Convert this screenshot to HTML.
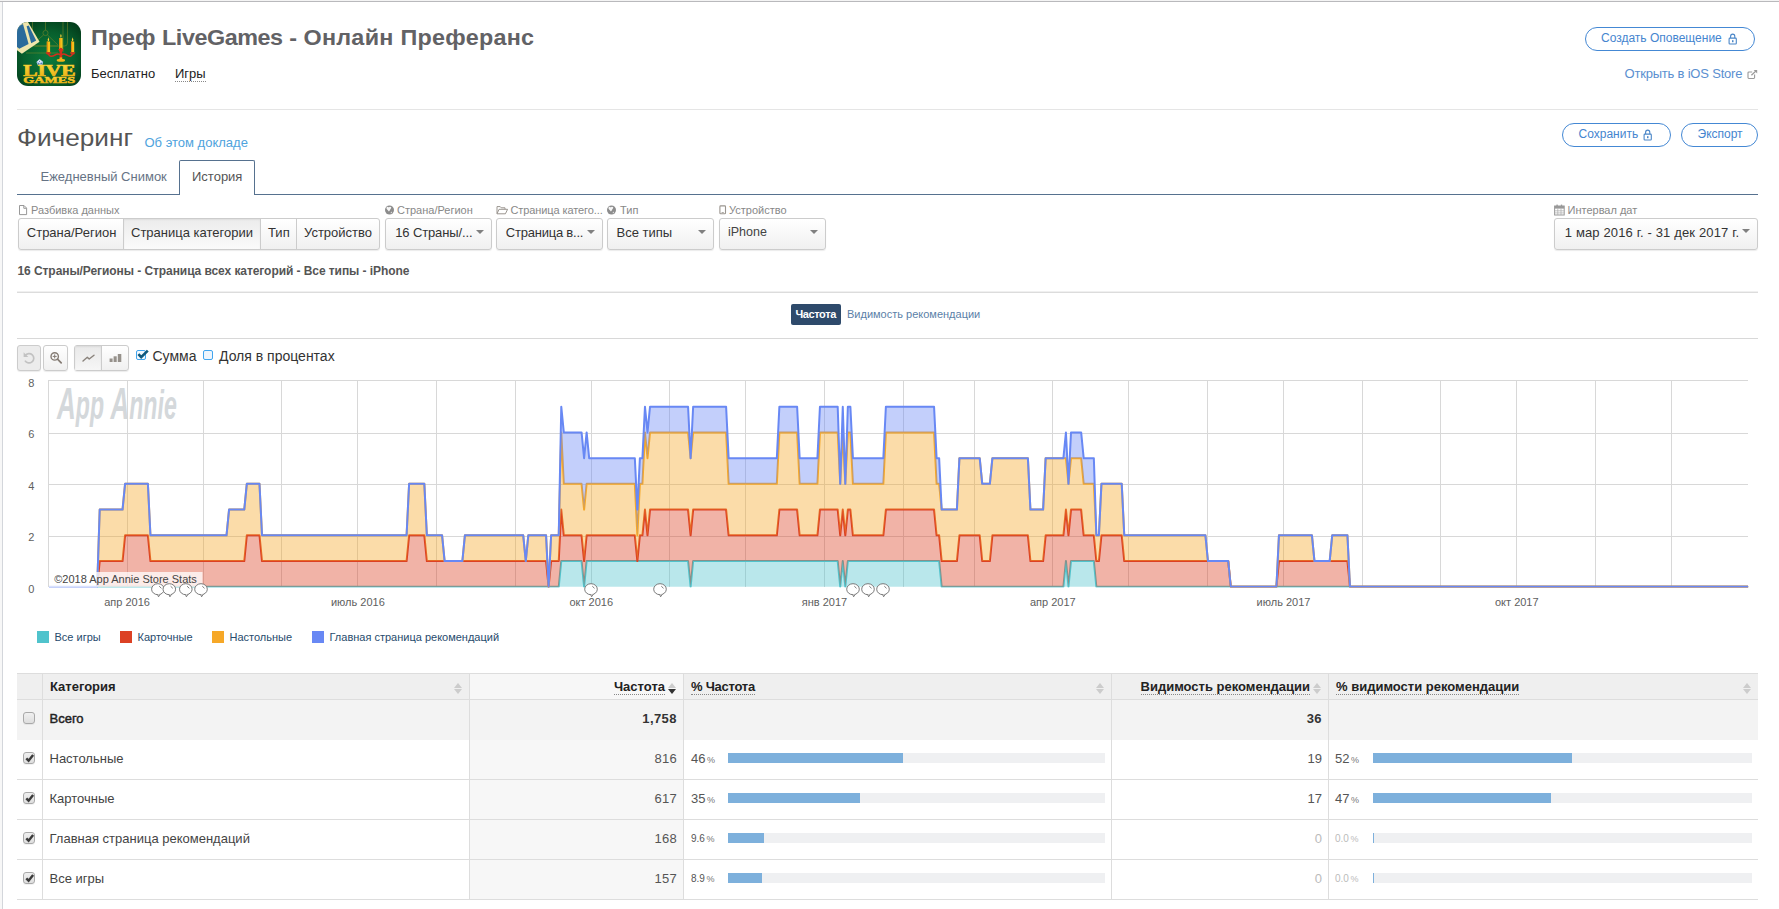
<!DOCTYPE html>
<html lang="ru">
<head>
<meta charset="utf-8">
<title>Преф LiveGames - Онлайн Преферанс</title>
<style>
html,body{margin:0;padding:0;}
body{width:1779px;height:909px;background:#fff;position:relative;overflow:hidden;
 font-family:"Liberation Sans",sans-serif;color:#333;}
.t{position:absolute;line-height:1;white-space:nowrap;}
.b{position:absolute;box-sizing:border-box;}
.hr{position:absolute;left:17px;width:1741px;height:1px;background:#ddd;}
.pill{position:absolute;box-sizing:border-box;border:1px solid #4488d4;border-radius:12px;height:24px;background:#fff;}
.lnk{color:#4585cf;}
.btn{position:absolute;box-sizing:border-box;border:1px solid #ccc;border-radius:3px;
 background:linear-gradient(#fff,#f0f0f0);box-shadow:0 1px 1px rgba(0,0,0,.08);}
.lab{color:#888;}
.caret{position:absolute;width:0;height:0;border-left:4px solid transparent;border-right:4px solid transparent;border-top:4.5px solid #808080;}
svg{position:absolute;left:0;top:0;overflow:visible;}
svg text{font-family:"Liberation Sans",sans-serif;}
.th{font-weight:bold;color:#222;}
.num{color:#555;}
</style>
</head>
<body>
<!-- page frame -->
<div class="b" style="left:0;top:0;width:1779px;height:1px;background:#f4f4f4"></div>
<div class="b" style="left:0;top:1px;width:1779px;height:1px;background:#b9b9bc"></div>
<div class="b" style="left:0;top:2px;width:2px;height:907px;background:#f7f7f7"></div>
<div class="b" style="left:2px;top:2px;width:1px;height:907px;background:#d3d6db"></div>

<!-- app icon -->
<svg style="left:17px;top:22px" width="64" height="64" viewBox="0 0 64 64">
<defs>
<radialGradient id="gbg" cx="50%" cy="55%" r="65%"><stop offset="0" stop-color="#0b7a3c"/><stop offset="0.6" stop-color="#08602e"/><stop offset="1" stop-color="#033d1b"/></radialGradient>
<clipPath id="icl"><rect x="0" y="0" width="64" height="64" rx="11" ry="11"/></clipPath>
<linearGradient id="gy" x1="0" y1="0" x2="0" y2="1"><stop offset="0" stop-color="#ffe24a"/><stop offset="1" stop-color="#e8a90c"/></linearGradient>
</defs>
<g clip-path="url(#icl)">
<rect width="64" height="64" fill="url(#gbg)"/>
<g fill="none" stroke="#7c8a2a" stroke-width="0.6" opacity="0.9">
<rect x="15.5" y="-3" width="35" height="27" rx="3"/>
<path d="M28.5,-1 V8 M46,-1 V30 M9,31 H41"/>
<circle cx="28.5" cy="11" r="2.6"/>
<path d="M26.5,13 L14,24 M30.5,13 L41,23 M14,24 H41"/>
</g>
<path d="M0,4.4 L8,0 L11,0 L22.5,19.8 L4.9,31.7 L0,28.2 Z" fill="#f0e6ad"/>
<path d="M0,5 L6,1.9 L11.6,22 L2.3,26.8 L0,25 Z" fill="#2b6b9b"/>
<path d="M9.6,4.3 L11.7,3.4 L19.2,18.5 L14.2,21.2 Z" fill="#2b6b9b"/>
<!-- candles -->
<g>
<rect x="29.8" y="19.5" width="3.3" height="10.8" fill="#f5c21a"/><rect x="29.8" y="19.5" width="1.1" height="10.8" fill="#e08a10"/>
<rect x="42.2" y="16" width="3.4" height="11" fill="#f5c21a"/><rect x="42.2" y="16" width="1.1" height="11" fill="#e08a10"/>
<rect x="54" y="19.5" width="3.2" height="10.8" fill="#f5c21a"/><rect x="54" y="19.5" width="1.1" height="10.8" fill="#e08a10"/>
<path d="M31.4,15.2 Q32.8,17.6 31.4,19.6 Q30,17.6 31.4,15.2 Z" fill="#ffd23a"/>
<path d="M43.9,11.8 Q45.4,14.2 43.9,16.2 Q42.4,14.2 43.9,11.8 Z" fill="#ffd23a"/>
<path d="M55.6,15.2 Q57,17.6 55.6,19.6 Q54.2,17.6 55.6,15.2 Z" fill="#ffd23a"/>
</g>
<g fill="none" stroke="#d2301c" stroke-width="1.5" stroke-linecap="round">
<path d="M43.9,27 V37" stroke-width="2.6"/>
<path d="M31.4,32 Q33,36 38,33 Q41,31.4 43.2,32.6"/>
<path d="M55.6,32 Q54,36 49.6,33 Q46.6,31.4 44.6,32.6"/>
</g>
<path d="M28.6,30.2 H34.2 L33,32.4 H29.8 Z M52.8,30.2 H58.4 L57.2,32.4 H54 Z M41.2,27 H46.6 L45.4,29.4 H42.4 Z" fill="#d2301c"/>
<ellipse cx="43.9" cy="38.2" rx="4.2" ry="1.5" fill="#f2b418"/>
<rect x="42.6" y="35.4" width="2.6" height="2.6" fill="#f2b418"/>
<!-- dice -->
<path d="M19.4,40 L22.6,37 L26.2,39.8 L25.4,43.4 L21,43.8 Z" fill="#9fc0e6"/>
<path d="M20.2,39.6 L22.6,37.8 L25,39.6 L22.8,41 Z" fill="#eaf2fb"/>
<circle cx="21.6" cy="42" r="0.65" fill="#2d5c96"/><circle cx="24.2" cy="41.6" r="0.65" fill="#2d5c96"/><circle cx="22.6" cy="39.3" r="0.55" fill="#2d5c96"/>
<!-- text -->
<text x="6.2" y="53.8" style="font-family:'Liberation Serif',serif" font-weight="bold" font-size="16.3" fill="url(#gy)" stroke="#f0bd18" stroke-width="0.7" paint-order="stroke" textLength="52.4" lengthAdjust="spacingAndGlyphs">LIVE</text>
<text x="6.2" y="60.5" style="font-family:'Liberation Serif',serif" font-weight="bold" font-size="8.9" fill="url(#gy)" stroke="#e9b012" stroke-width="0.5" paint-order="stroke" textLength="51.9" lengthAdjust="spacingAndGlyphs">GAMES</text>
</g>
</svg>


<!-- header -->
<div class="t" style="left:91px;top:27.38px;font-size:22px;font-weight:bold;color:#626265;transform:scaleX(1.062);transform-origin:0 0;">Преф <span style="letter-spacing:-0.42px">LiveGames</span> - <span style="letter-spacing:0.25px">Онлайн  Преферанс</span></div>
<div class="t" style="left:91px;top:67.00px;font-size:13px;color:#222;">Бесплатно</div>
<div class="t" style="left:175px;top:67.00px;font-size:13px;color:#222;border-bottom:1px dotted #888;padding-bottom:1px;">Игры</div>
<div class="pill" style="left:1585px;top:27px;width:170px;"></div>
<div class="t lnk" style="left:1601px;top:31.84px;font-size:12px;">Создать Оповещение</div>
<div class="pill" style="left:1562px;top:123px;width:109px;"></div>
<div class="t lnk" style="left:1578.5px;top:127.84px;font-size:12px;">Сохранить</div>
<div class="pill" style="left:1681px;top:123px;width:77px;"></div>
<div class="t lnk" style="left:1697.5px;top:127.84px;font-size:12px;">Экспорт</div>
<div class="t" style="left:1624.5px;top:67.00px;font-size:13px;letter-spacing:-0.2px;color:#5a8fd0;">Открыть в iOS Store</div>
<div class="hr" style="top:109px;background:#e5e5e5"></div>

<div class="t" style="left:17px;top:126.81px;font-size:23.5px;color:#555;transform:scaleX(1.115);transform-origin:0 0;">Фичеринг</div>
<div class="t" style="left:144.5px;top:136.00px;font-size:13px;color:#4fa3dd;">Об этом докладе</div>

<!-- tabs -->
<div class="b" style="left:17px;top:194px;width:1741px;height:1px;background:#56718f"></div>
<div class="b" style="left:179px;top:160px;width:76px;height:35px;border:1px solid #56718f;border-bottom:none;border-radius:2px 2px 0 0;background:#fff"></div>
<div class="t" style="left:40.5px;top:169.50px;font-size:13px;color:#667385;">Ежедневный Снимок</div>
<div class="t" style="left:192px;top:169.50px;font-size:13px;color:#555;">История</div>

<!-- filters -->
<div class="t lab" style="left:31px;top:204.69px;font-size:11px;">Разбивка данных</div>
<div class="btn" style="left:18px;top:218px;width:362px;height:32px;"></div>
<div class="b" style="left:123px;top:219px;width:138px;height:30px;background:linear-gradient(#ececec,#fbfbfb);border-left:1px solid #ccc;border-right:1px solid #ccc;box-shadow:inset 0 1px 2px rgba(0,0,0,.06)"></div>
<div class="b" style="left:296px;top:219px;width:1px;height:30px;background:#ccc"></div>
<div class="t" style="left:26.8px;top:226.00px;font-size:13px;color:#333;">Страна/Регион</div>
<div class="t" style="left:131px;top:226.00px;font-size:13px;color:#333;">Страница категории</div>
<div class="t" style="left:268px;top:226.00px;font-size:13px;color:#333;">Тип</div>
<div class="t" style="left:304px;top:226.00px;font-size:13px;color:#333;">Устройство</div>

<div class="t lab" style="left:397px;top:204.69px;font-size:11px;">Страна/Регион</div>
<div class="btn" style="left:385px;top:218px;width:107px;height:32px;"></div>
<div class="t" style="left:395.2px;top:226.00px;font-size:13px;color:#333;letter-spacing:-0.12px;">16 Страны/...</div>
<div class="caret" style="left:476px;top:229.5px"></div>

<div class="t lab" style="left:510.5px;top:204.69px;font-size:11px;letter-spacing:-0.1px;">Страница катего...</div>
<div class="btn" style="left:496px;top:218px;width:107px;height:32px;"></div>
<div class="t" style="left:505.8px;top:226.00px;font-size:13px;color:#333;letter-spacing:-0.22px;">Страница в...</div>
<div class="caret" style="left:587px;top:229.5px"></div>

<div class="t lab" style="left:620px;top:204.69px;font-size:11px;">Тип</div>
<div class="btn" style="left:607px;top:218px;width:107px;height:32px;"></div>
<div class="t" style="left:616.5px;top:226.00px;font-size:13px;color:#333;">Все типы</div>
<div class="caret" style="left:698px;top:229.5px"></div>

<div class="t lab" style="left:729px;top:204.69px;font-size:11px;">Устройство</div>
<div class="btn" style="left:719px;top:218px;width:107px;height:32px;"></div>
<div class="t" style="left:728px;top:226.42px;font-size:12.5px;color:#444;">iPhone</div>
<div class="caret" style="left:810px;top:229.5px"></div>

<div class="t lab" style="left:1567.5px;top:204.69px;font-size:11px;">Интервал дат</div>
<div class="btn" style="left:1554px;top:218px;width:204px;height:32px;"></div>
<div class="t" style="left:1564.8px;top:226.00px;font-size:13px;color:#333;letter-spacing:0.14px;">1 мар 2016 г. - 31 дек 2017 г.</div>
<div class="caret" style="left:1742px;top:229px"></div>

<div class="t" style="left:17.5px;top:264.84px;font-size:12px;font-weight:bold;color:#555;letter-spacing:-0.07px;">16 Страны/Регионы - Страница всех категорий - Все типы - iPhone</div>
<div class="hr" style="top:291px;background:#f0f0f0"></div><div class="hr" style="top:292px;background:#dcdcdc"></div>

<!-- chart tabs -->
<div class="b" style="left:791px;top:304px;width:50px;height:21px;background:#2e4a6b;border-radius:2px"></div>
<div class="t" style="left:795.5px;top:308.69px;font-size:11px;font-weight:bold;color:#fff;letter-spacing:-0.4px;">Частота</div>
<div class="t" style="left:847px;top:308.69px;font-size:11px;color:#5b7fa8;">Видимость рекомендации</div>
<div class="hr" style="top:338px;background:#d8d8d8"></div>

<!-- toolbar -->
<div class="btn" style="left:17px;top:345px;width:24px;height:26px;background:#ececec"></div>
<div class="btn" style="left:43px;top:345px;width:25px;height:26px;"></div>
<div class="btn" style="left:74px;top:345px;width:55px;height:26px;"></div>
<div class="b" style="left:75px;top:346px;width:27px;height:24px;background:linear-gradient(#e9e9e9,#f6f6f6);border-right:1px solid #ccc;box-shadow:inset 0 1px 2px rgba(0,0,0,.07)"></div>
<svg style="left:22px;top:350px" width="16" height="16" viewBox="0 0 16 16"><path d="M3.2,5.6 A4.7,4.7 0 1 1 3.0,10.6" fill="none" stroke="#c2c2c2" stroke-width="1.7"/><path d="M1.6,2.2 L1.6,6.9 L6.3,6.9 Z" fill="#c2c2c2"/></svg>
<svg style="left:49px;top:351px" width="14" height="14" viewBox="0 0 14 14"><circle cx="5.7" cy="5.4" r="3.7" fill="none" stroke="#857c74" stroke-width="1.4"/><path d="M8.5,8.2 L12.2,11.9" stroke="#857c74" stroke-width="1.7" stroke-linecap="round"/><path d="M3.7,5.4 H7.7 M5.7,3.4 V7.4" stroke="#857c74" stroke-width="1"/></svg>
<svg style="left:82px;top:353px" width="14" height="10" viewBox="0 0 14 10"><path d="M1,8 L5.3,4.3 L7.2,6 L12,2.2" fill="none" stroke="#8a837c" stroke-width="1.4" stroke-linejoin="round" stroke-linecap="round"/></svg>
<svg style="left:109px;top:353px" width="14" height="10" viewBox="0 0 14 10"><rect x="0.6" y="5.5" width="3" height="3.5" fill="#96918b"/><rect x="4.6" y="3.3" width="3.1" height="5.7" fill="#96918b"/><rect x="8.8" y="1" width="3.5" height="8" fill="#96918b"/></svg>
<div class="b" style="left:136px;top:350px;width:10px;height:10px;border:1px solid #41a5ee;border-radius:2px;background:#f4f9fe"></div>
<svg style="left:136px;top:348px" width="14" height="14" viewBox="0 0 14 14"><path d="M2.4,6.2 L5.2,9.2 L11.8,2.6" fill="none" stroke="#10597c" stroke-width="2.6"/></svg>
<div class="b" style="left:203px;top:350px;width:10px;height:10px;border:1px solid #41a5ee;border-radius:2px;background:#eef5fc"></div>
<svg style="left:1727.5px;top:32.5px" width="10" height="12" viewBox="0 0 10 12"><rect x="1.1" y="5.1" width="7.2" height="5.9" rx="0.8" fill="none" stroke="#4a86c8" stroke-width="1.1"/><path d="M2.6,5 V3.4 A2.1,2.3 0 0 1 6.8,3.4 V5" fill="none" stroke="#4a86c8" stroke-width="1.1"/><rect x="4" y="7.2" width="1.5" height="2" fill="#4a86c8"/></svg>
<svg style="left:1643.3px;top:128.6px" width="10" height="12" viewBox="0 0 10 12"><rect x="1.1" y="5.1" width="7.2" height="5.9" rx="0.8" fill="none" stroke="#4a86c8" stroke-width="1.1"/><path d="M2.6,5 V3.4 A2.1,2.3 0 0 1 6.8,3.4 V5" fill="none" stroke="#4a86c8" stroke-width="1.1"/><rect x="4" y="7.2" width="1.5" height="2" fill="#4a86c8"/></svg>
<svg style="left:1747px;top:69px" width="12" height="11" viewBox="0 0 12 11"><path d="M7.6,5.5 V8.6 A0.9,0.9 0 0 1 6.7,9.5 H1.9 A0.9,0.9 0 0 1 1,8.6 V3.9 A0.9,0.9 0 0 1 1.9,3 H5.2" fill="none" stroke="#999" stroke-width="1.1"/><path d="M4.4,6.3 L9.6,1.4" stroke="#999" stroke-width="1.3"/><path d="M6.6,1 H10.2 V4.6 Z" fill="#999"/></svg>
<svg style="left:18px;top:204px" width="10" height="12" viewBox="0 0 10 12"><path d="M1.5,1.5 H6 L8.6,4.1 V10.6 H1.5 Z" fill="none" stroke="#999" stroke-width="1"/><path d="M5.8,1.6 V4.3 H8.5" fill="none" stroke="#999" stroke-width="1"/></svg>
<svg style="left:385px;top:205px" width="10" height="11" viewBox="0 0 10 11"><circle cx="4.5" cy="5" r="4.5" fill="#8c8c8c"/><path d="M1.5,2.6 C2.2,1.4 3.3,1.7 3.8,2.4 C4.5,1.5 5.9,1.7 6.3,2.6 C6.2,3.8 5.1,4.4 4.6,5.8 L3.9,6.4 C3.3,5.2 1.9,4.6 1.5,3.4 Z" fill="#fff" fill-opacity="0.92"/><path d="M5.6,7.4 L6.6,6.6 L7,7.6 L6,8.4 Z" fill="#fff" fill-opacity="0.8"/></svg>
<svg style="left:607.2px;top:205px" width="10" height="11" viewBox="0 0 10 11"><circle cx="4.5" cy="5" r="4.5" fill="#8c8c8c"/><path d="M1.5,2.6 C2.2,1.4 3.3,1.7 3.8,2.4 C4.5,1.5 5.9,1.7 6.3,2.6 C6.2,3.8 5.1,4.4 4.6,5.8 L3.9,6.4 C3.3,5.2 1.9,4.6 1.5,3.4 Z" fill="#fff" fill-opacity="0.92"/><path d="M5.6,7.4 L6.6,6.6 L7,7.6 L6,8.4 Z" fill="#fff" fill-opacity="0.8"/></svg>
<svg style="left:496px;top:205px" width="13" height="10" viewBox="0 0 13 10"><path d="M1,8.6 V1.6 H4.2 L5.2,2.8 H9 V4.2" fill="none" stroke="#9a958f" stroke-width="1"/><path d="M1,8.8 L3,4.3 H11.6 L9.4,8.8 Z" fill="none" stroke="#9a958f" stroke-width="1"/></svg>
<svg style="left:719px;top:205px" width="8" height="10" viewBox="0 0 8 10"><rect x="0.9" y="0.9" width="5.6" height="7.8" rx="0.8" fill="none" stroke="#9a958f" stroke-width="1.1"/><rect x="2.6" y="7" width="2.2" height="0.8" fill="#9a958f"/></svg>
<svg style="left:1554px;top:204px" width="11" height="12" viewBox="0 0 11 12"><rect x="0.6" y="2" width="9.6" height="9" fill="#fff" stroke="#999" stroke-width="1"/><rect x="0.6" y="2" width="9.6" height="2.6" fill="#999"/><path d="M3.8,4.6 V11 M7,4.6 V11 M0.6,6.8 H10.2 M0.6,8.9 H10.2" stroke="#aaa" stroke-width="0.7"/><rect x="2.4" y="0.6" width="1.4" height="2.6" fill="#999"/><rect x="6.8" y="0.6" width="1.4" height="2.6" fill="#999"/></svg>

<div class="t" style="left:152.5px;top:348.85px;font-size:14px;color:#333;">Сумма</div>
<div class="t" style="left:219px;top:348.85px;font-size:14px;color:#333;">Доля в процентах</div>

<!-- chart -->
<svg width="1779" height="909" viewBox="0 0 1779 909">
<rect x="48" y="380" width="1" height="207" fill="#d8d8d8"/><rect x="127" y="380" width="1" height="207" fill="#d8d8d8"/><rect x="203" y="380" width="1" height="207" fill="#d8d8d8"/><rect x="281" y="380" width="1" height="207" fill="#d8d8d8"/><rect x="357" y="380" width="1" height="207" fill="#d8d8d8"/><rect x="436" y="380" width="1" height="207" fill="#d8d8d8"/><rect x="515" y="380" width="1" height="207" fill="#d8d8d8"/><rect x="591" y="380" width="1" height="207" fill="#d8d8d8"/><rect x="669" y="380" width="1" height="207" fill="#d8d8d8"/><rect x="745" y="380" width="1" height="207" fill="#d8d8d8"/><rect x="824" y="380" width="1" height="207" fill="#d8d8d8"/><rect x="903" y="380" width="1" height="207" fill="#d8d8d8"/><rect x="974" y="380" width="1" height="207" fill="#d8d8d8"/><rect x="1052" y="380" width="1" height="207" fill="#d8d8d8"/><rect x="1128" y="380" width="1" height="207" fill="#d8d8d8"/><rect x="1207" y="380" width="1" height="207" fill="#d8d8d8"/><rect x="1283" y="380" width="1" height="207" fill="#d8d8d8"/><rect x="1362" y="380" width="1" height="207" fill="#d8d8d8"/><rect x="1440" y="380" width="1" height="207" fill="#d8d8d8"/><rect x="1516" y="380" width="1" height="207" fill="#d8d8d8"/><rect x="1595" y="380" width="1" height="207" fill="#d8d8d8"/><rect x="1671" y="380" width="1" height="207" fill="#d8d8d8"/><rect x="48" y="380" width="1700" height="1" fill="#d8d8d8"/><text x="34.3" y="387" text-anchor="end" font-size="11" fill="#606060">8</text><rect x="48" y="433" width="1700" height="1" fill="#d8d8d8"/><text x="34.3" y="438.3" text-anchor="end" font-size="11" fill="#606060">6</text><rect x="48" y="484" width="1700" height="1" fill="#d8d8d8"/><text x="34.3" y="490" text-anchor="end" font-size="11" fill="#606060">4</text><rect x="48" y="536" width="1700" height="1" fill="#d8d8d8"/><text x="34.3" y="541.3" text-anchor="end" font-size="11" fill="#606060">2</text><text x="34.3" y="593" text-anchor="end" font-size="11" fill="#606060">0</text><text x="127.1" y="606" text-anchor="middle" font-size="11" fill="#606060">апр 2016</text><text x="357.9" y="606" text-anchor="middle" font-size="11" fill="#606060">июль 2016</text><text x="591.2" y="606" text-anchor="middle" font-size="11" fill="#606060">окт 2016</text><text x="824.5" y="606" text-anchor="middle" font-size="11" fill="#606060">янв 2017</text><text x="1052.8" y="606" text-anchor="middle" font-size="11" fill="#606060">апр 2017</text><text x="1283.5" y="606" text-anchor="middle" font-size="11" fill="#606060">июль 2017</text><text x="1516.8" y="606" text-anchor="middle" font-size="11" fill="#606060">окт 2017</text>
<g transform="translate(57,419) scale(0.578,1)"><text x="0" y="0" font-size="40" font-style="italic" font-weight="bold" fill="#d4d8db"><tspan font-size="45">A</tspan>pp <tspan font-size="45">A</tspan>nnie</text></g>
<defs><clipPath id="plotclip"><rect x="48" y="378" width="1701" height="209.5"/></clipPath></defs><g clip-path="url(#plotclip)">
<polygon points="49,586.75 558.74,586.75 561.27,561.03 581.56,561.03 584.1,586.75 586.63,561.03 688.07,561.03 690.61,586.75 693.14,561.03 837.7,561.03 840.23,586.75 842.77,561.03 845.3,586.75 847.84,561.03 939.14,561.03 941.67,586.75 1063.4,586.75 1065.94,561.03 1068.47,586.75 1071.01,561.03 1093.83,561.03 1096.37,586.75 1748.12,586.75 1748.12,586.75 49,586.75" fill="#50c3cc" fill-opacity="0.4"/>
<polyline points="97.18,586.75 558.74,586.75 561.27,561.03 581.56,561.03 584.1,586.75 586.63,561.03 688.07,561.03 690.61,586.75 693.14,561.03 837.7,561.03 840.23,586.75 842.77,561.03 845.3,586.75 847.84,561.03 939.14,561.03 941.67,586.75 1063.4,586.75 1065.94,561.03 1068.47,586.75 1071.01,561.03 1093.83,561.03 1096.37,586.75 1748.12,586.75" fill="none" stroke="#50c3cc" stroke-width="2" stroke-linejoin="round"/>
<polygon points="49,586.75 97.18,586.75 99.72,561.03 122.54,561.03 125.08,535.31 147.9,535.31 150.44,561.03 244.27,561.03 246.81,535.31 259.49,535.31 262.02,561.03 406.58,561.03 409.11,535.31 424.33,535.31 426.86,561.03 546.06,561.03 548.59,586.75 551.13,561.03 558.74,561.03 561.27,509.59 563.81,535.31 581.56,535.31 584.1,561.03 586.63,535.31 634.82,535.31 637.35,561.03 639.89,535.31 642.42,535.31 644.96,509.59 647.5,535.31 650.03,509.59 688.07,509.59 690.61,535.31 693.14,509.59 726.11,509.59 728.65,535.31 776.83,535.31 779.37,509.59 797.12,509.59 799.66,535.31 817.41,535.31 819.94,509.59 837.7,509.59 840.23,535.31 842.77,509.59 845.3,535.31 847.84,509.59 850.38,509.59 852.91,535.31 883.34,535.31 885.88,509.59 934.06,509.59 936.6,535.31 939.14,535.31 941.67,561.03 956.89,561.03 959.42,535.31 979.71,535.31 982.25,561.03 989.86,561.03 992.39,535.31 1027.9,535.31 1030.43,561.03 1043.11,561.03 1045.65,535.31 1063.4,535.31 1065.94,509.59 1068.47,535.31 1071.01,509.59 1081.15,509.59 1083.69,535.31 1093.83,535.31 1096.37,561.03 1098.9,561.03 1101.44,535.31 1121.73,535.31 1124.26,561.03 1228.24,561.03 1230.78,586.75 1276.42,586.75 1278.96,561.03 1347.43,561.03 1349.97,586.75 1748.12,586.75 1748.12,586.75 1096.37,586.75 1093.83,561.03 1071.01,561.03 1068.47,586.75 1065.94,561.03 1063.4,586.75 941.67,586.75 939.14,561.03 847.84,561.03 845.3,586.75 842.77,561.03 840.23,586.75 837.7,561.03 693.14,561.03 690.61,586.75 688.07,561.03 586.63,561.03 584.1,586.75 581.56,561.03 561.27,561.03 558.74,586.75 49,586.75" fill="#dc4124" fill-opacity="0.4"/>
<polyline points="97.18,586.75 99.72,561.03 122.54,561.03 125.08,535.31 147.9,535.31 150.44,561.03 244.27,561.03 246.81,535.31 259.49,535.31 262.02,561.03 406.58,561.03 409.11,535.31 424.33,535.31 426.86,561.03 546.06,561.03 548.59,586.75 551.13,561.03 558.74,561.03 561.27,509.59 563.81,535.31 581.56,535.31 584.1,561.03 586.63,535.31 634.82,535.31 637.35,561.03 639.89,535.31 642.42,535.31 644.96,509.59 647.5,535.31 650.03,509.59 688.07,509.59 690.61,535.31 693.14,509.59 726.11,509.59 728.65,535.31 776.83,535.31 779.37,509.59 797.12,509.59 799.66,535.31 817.41,535.31 819.94,509.59 837.7,509.59 840.23,535.31 842.77,509.59 845.3,535.31 847.84,509.59 850.38,509.59 852.91,535.31 883.34,535.31 885.88,509.59 934.06,509.59 936.6,535.31 939.14,535.31 941.67,561.03 956.89,561.03 959.42,535.31 979.71,535.31 982.25,561.03 989.86,561.03 992.39,535.31 1027.9,535.31 1030.43,561.03 1043.11,561.03 1045.65,535.31 1063.4,535.31 1065.94,509.59 1068.47,535.31 1071.01,509.59 1081.15,509.59 1083.69,535.31 1093.83,535.31 1096.37,561.03 1098.9,561.03 1101.44,535.31 1121.73,535.31 1124.26,561.03 1228.24,561.03 1230.78,586.75 1276.42,586.75 1278.96,561.03 1347.43,561.03 1349.97,586.75 1748.12,586.75" fill="none" stroke="#dc4124" stroke-width="2" stroke-linejoin="round"/>
<polygon points="49,586.75 97.18,586.75 99.72,509.59 122.54,509.59 125.08,483.87 147.9,483.87 150.44,535.31 226.52,535.31 229.06,509.59 244.27,509.59 246.81,483.87 259.49,483.87 262.02,535.31 406.58,535.31 409.11,483.87 424.33,483.87 426.86,535.31 442.08,535.31 444.62,561.03 462.37,561.03 464.9,535.31 523.23,535.31 525.77,561.03 528.3,535.31 546.06,535.31 548.59,586.75 551.13,535.31 558.74,535.31 561.27,432.43 563.81,483.87 581.56,483.87 584.1,509.59 586.63,483.87 634.82,483.87 637.35,535.31 639.89,483.87 642.42,483.87 644.96,432.43 647.5,458.15 650.03,432.43 688.07,432.43 690.61,458.15 693.14,432.43 726.11,432.43 728.65,483.87 776.83,483.87 779.37,432.43 797.12,432.43 799.66,483.87 817.41,483.87 819.94,432.43 837.7,432.43 840.23,483.87 842.77,432.43 845.3,483.87 847.84,432.43 850.38,432.43 852.91,483.87 883.34,483.87 885.88,432.43 934.06,432.43 936.6,483.87 939.14,483.87 941.67,509.59 956.89,509.59 959.42,458.15 979.71,458.15 982.25,483.87 989.86,483.87 992.39,458.15 1027.9,458.15 1030.43,509.59 1043.11,509.59 1045.65,458.15 1065.94,458.15 1068.47,483.87 1071.01,458.15 1081.15,458.15 1083.69,483.87 1093.83,483.87 1096.37,535.31 1098.9,535.31 1101.44,483.87 1121.73,483.87 1124.26,535.31 1205.42,535.31 1207.95,561.03 1228.24,561.03 1230.78,586.75 1276.42,586.75 1278.96,535.31 1311.93,535.31 1314.46,561.03 1329.68,561.03 1332.22,535.31 1347.43,535.31 1349.97,586.75 1748.12,586.75 1748.12,586.75 1349.97,586.75 1347.43,561.03 1278.96,561.03 1276.42,586.75 1230.78,586.75 1228.24,561.03 1124.26,561.03 1121.73,535.31 1101.44,535.31 1098.9,561.03 1096.37,561.03 1093.83,535.31 1083.69,535.31 1081.15,509.59 1071.01,509.59 1068.47,535.31 1065.94,509.59 1063.4,535.31 1045.65,535.31 1043.11,561.03 1030.43,561.03 1027.9,535.31 992.39,535.31 989.86,561.03 982.25,561.03 979.71,535.31 959.42,535.31 956.89,561.03 941.67,561.03 939.14,535.31 936.6,535.31 934.06,509.59 885.88,509.59 883.34,535.31 852.91,535.31 850.38,509.59 847.84,509.59 845.3,535.31 842.77,509.59 840.23,535.31 837.7,509.59 819.94,509.59 817.41,535.31 799.66,535.31 797.12,509.59 779.37,509.59 776.83,535.31 728.65,535.31 726.11,509.59 693.14,509.59 690.61,535.31 688.07,509.59 650.03,509.59 647.5,535.31 644.96,509.59 642.42,535.31 639.89,535.31 637.35,561.03 634.82,535.31 586.63,535.31 584.1,561.03 581.56,535.31 563.81,535.31 561.27,509.59 558.74,561.03 551.13,561.03 548.59,586.75 546.06,561.03 426.86,561.03 424.33,535.31 409.11,535.31 406.58,561.03 262.02,561.03 259.49,535.31 246.81,535.31 244.27,561.03 150.44,561.03 147.9,535.31 125.08,535.31 122.54,561.03 99.72,561.03 97.18,586.75 49,586.75" fill="#f6a828" fill-opacity="0.4"/>
<polyline points="97.18,586.75 99.72,509.59 122.54,509.59 125.08,483.87 147.9,483.87 150.44,535.31 226.52,535.31 229.06,509.59 244.27,509.59 246.81,483.87 259.49,483.87 262.02,535.31 406.58,535.31 409.11,483.87 424.33,483.87 426.86,535.31 442.08,535.31 444.62,561.03 462.37,561.03 464.9,535.31 523.23,535.31 525.77,561.03 528.3,535.31 546.06,535.31 548.59,586.75 551.13,535.31 558.74,535.31 561.27,432.43 563.81,483.87 581.56,483.87 584.1,509.59 586.63,483.87 634.82,483.87 637.35,535.31 639.89,483.87 642.42,483.87 644.96,432.43 647.5,458.15 650.03,432.43 688.07,432.43 690.61,458.15 693.14,432.43 726.11,432.43 728.65,483.87 776.83,483.87 779.37,432.43 797.12,432.43 799.66,483.87 817.41,483.87 819.94,432.43 837.7,432.43 840.23,483.87 842.77,432.43 845.3,483.87 847.84,432.43 850.38,432.43 852.91,483.87 883.34,483.87 885.88,432.43 934.06,432.43 936.6,483.87 939.14,483.87 941.67,509.59 956.89,509.59 959.42,458.15 979.71,458.15 982.25,483.87 989.86,483.87 992.39,458.15 1027.9,458.15 1030.43,509.59 1043.11,509.59 1045.65,458.15 1065.94,458.15 1068.47,483.87 1071.01,458.15 1081.15,458.15 1083.69,483.87 1093.83,483.87 1096.37,535.31 1098.9,535.31 1101.44,483.87 1121.73,483.87 1124.26,535.31 1205.42,535.31 1207.95,561.03 1228.24,561.03 1230.78,586.75 1276.42,586.75 1278.96,535.31 1311.93,535.31 1314.46,561.03 1329.68,561.03 1332.22,535.31 1347.43,535.31 1349.97,586.75 1748.12,586.75" fill="none" stroke="#f6a828" stroke-width="2" stroke-linejoin="round"/>
<polygon points="49,586.75 97.18,586.75 99.72,509.59 122.54,509.59 125.08,483.87 147.9,483.87 150.44,535.31 226.52,535.31 229.06,509.59 244.27,509.59 246.81,483.87 259.49,483.87 262.02,535.31 406.58,535.31 409.11,483.87 424.33,483.87 426.86,535.31 442.08,535.31 444.62,561.03 462.37,561.03 464.9,535.31 523.23,535.31 525.77,561.03 528.3,535.31 546.06,535.31 548.59,586.75 551.13,535.31 558.74,535.31 561.27,406.71 563.81,432.43 581.56,432.43 584.1,458.15 586.63,432.43 589.17,458.15 634.82,458.15 637.35,509.59 639.89,458.15 642.42,458.15 644.96,406.71 647.5,432.43 650.03,406.71 688.07,406.71 690.61,458.15 693.14,406.71 726.11,406.71 728.65,458.15 776.83,458.15 779.37,406.71 797.12,406.71 799.66,458.15 817.41,458.15 819.94,406.71 837.7,406.71 840.23,483.87 842.77,406.71 845.3,483.87 847.84,406.71 850.38,406.71 852.91,458.15 883.34,458.15 885.88,406.71 934.06,406.71 936.6,458.15 939.14,458.15 941.67,509.59 956.89,509.59 959.42,458.15 979.71,458.15 982.25,483.87 989.86,483.87 992.39,458.15 1027.9,458.15 1030.43,509.59 1043.11,509.59 1045.65,458.15 1063.4,458.15 1065.94,432.43 1068.47,483.87 1071.01,432.43 1081.15,432.43 1083.69,458.15 1093.83,458.15 1096.37,535.31 1098.9,535.31 1101.44,483.87 1121.73,483.87 1124.26,535.31 1205.42,535.31 1207.95,561.03 1228.24,561.03 1230.78,586.75 1276.42,586.75 1278.96,535.31 1311.93,535.31 1314.46,561.03 1329.68,561.03 1332.22,535.31 1347.43,535.31 1349.97,586.75 1748.12,586.75 1748.12,586.75 1349.97,586.75 1347.43,535.31 1332.22,535.31 1329.68,561.03 1314.46,561.03 1311.93,535.31 1278.96,535.31 1276.42,586.75 1230.78,586.75 1228.24,561.03 1207.95,561.03 1205.42,535.31 1124.26,535.31 1121.73,483.87 1101.44,483.87 1098.9,535.31 1096.37,535.31 1093.83,483.87 1083.69,483.87 1081.15,458.15 1071.01,458.15 1068.47,483.87 1065.94,458.15 1045.65,458.15 1043.11,509.59 1030.43,509.59 1027.9,458.15 992.39,458.15 989.86,483.87 982.25,483.87 979.71,458.15 959.42,458.15 956.89,509.59 941.67,509.59 939.14,483.87 936.6,483.87 934.06,432.43 885.88,432.43 883.34,483.87 852.91,483.87 850.38,432.43 847.84,432.43 845.3,483.87 842.77,432.43 840.23,483.87 837.7,432.43 819.94,432.43 817.41,483.87 799.66,483.87 797.12,432.43 779.37,432.43 776.83,483.87 728.65,483.87 726.11,432.43 693.14,432.43 690.61,458.15 688.07,432.43 650.03,432.43 647.5,458.15 644.96,432.43 642.42,483.87 639.89,483.87 637.35,535.31 634.82,483.87 586.63,483.87 584.1,509.59 581.56,483.87 563.81,483.87 561.27,432.43 558.74,535.31 551.13,535.31 548.59,586.75 546.06,535.31 528.3,535.31 525.77,561.03 523.23,535.31 464.9,535.31 462.37,561.03 444.62,561.03 442.08,535.31 426.86,535.31 424.33,483.87 409.11,483.87 406.58,535.31 262.02,535.31 259.49,483.87 246.81,483.87 244.27,509.59 229.06,509.59 226.52,535.31 150.44,535.31 147.9,483.87 125.08,483.87 122.54,509.59 99.72,509.59 97.18,586.75 49,586.75" fill="#6888f4" fill-opacity="0.4"/>
<polyline points="49,586.75 97.18,586.75 99.72,509.59 122.54,509.59 125.08,483.87 147.9,483.87 150.44,535.31 226.52,535.31 229.06,509.59 244.27,509.59 246.81,483.87 259.49,483.87 262.02,535.31 406.58,535.31 409.11,483.87 424.33,483.87 426.86,535.31 442.08,535.31 444.62,561.03 462.37,561.03 464.9,535.31 523.23,535.31 525.77,561.03 528.3,535.31 546.06,535.31 548.59,586.75 551.13,535.31 558.74,535.31 561.27,406.71 563.81,432.43 581.56,432.43 584.1,458.15 586.63,432.43 589.17,458.15 634.82,458.15 637.35,509.59 639.89,458.15 642.42,458.15 644.96,406.71 647.5,432.43 650.03,406.71 688.07,406.71 690.61,458.15 693.14,406.71 726.11,406.71 728.65,458.15 776.83,458.15 779.37,406.71 797.12,406.71 799.66,458.15 817.41,458.15 819.94,406.71 837.7,406.71 840.23,483.87 842.77,406.71 845.3,483.87 847.84,406.71 850.38,406.71 852.91,458.15 883.34,458.15 885.88,406.71 934.06,406.71 936.6,458.15 939.14,458.15 941.67,509.59 956.89,509.59 959.42,458.15 979.71,458.15 982.25,483.87 989.86,483.87 992.39,458.15 1027.9,458.15 1030.43,509.59 1043.11,509.59 1045.65,458.15 1063.4,458.15 1065.94,432.43 1068.47,483.87 1071.01,432.43 1081.15,432.43 1083.69,458.15 1093.83,458.15 1096.37,535.31 1098.9,535.31 1101.44,483.87 1121.73,483.87 1124.26,535.31 1205.42,535.31 1207.95,561.03 1228.24,561.03 1230.78,586.75 1276.42,586.75 1278.96,535.31 1311.93,535.31 1314.46,561.03 1329.68,561.03 1332.22,535.31 1347.43,535.31 1349.97,586.75 1748.12,586.75" fill="none" stroke="#6888f4" stroke-width="2" stroke-linejoin="round"/>
</g>
<rect x="49" y="572" width="153.5" height="15" fill="#fff" fill-opacity="0.75"/>
<text x="54.2" y="583" font-size="11" fill="#444">©2018 App Annie Store Stats</text>
<g transform="translate(157.9,589.2)"><ellipse cx="0" cy="0" rx="6.3" ry="5.5" fill="#fff" stroke="#7a7a7a" stroke-width="1"/><path d="M-0.3,5.2 L0.6,7.6 L2.4,4.8" fill="#fff" stroke="#7a7a7a" stroke-width="1" stroke-linejoin="miter"/><path d="M1.3,-3.0 L3.5,-0.9" stroke="#7a7a7a" stroke-width="1" fill="none"/></g><g transform="translate(169.3,589.2)"><ellipse cx="0" cy="0" rx="6.3" ry="5.5" fill="#fff" stroke="#7a7a7a" stroke-width="1"/><path d="M-0.3,5.2 L0.6,7.6 L2.4,4.8" fill="#fff" stroke="#7a7a7a" stroke-width="1" stroke-linejoin="miter"/><path d="M1.3,-3.0 L3.5,-0.9" stroke="#7a7a7a" stroke-width="1" fill="none"/></g><g transform="translate(185.8,589.2)"><ellipse cx="0" cy="0" rx="6.3" ry="5.5" fill="#fff" stroke="#7a7a7a" stroke-width="1"/><path d="M-0.3,5.2 L0.6,7.6 L2.4,4.8" fill="#fff" stroke="#7a7a7a" stroke-width="1" stroke-linejoin="miter"/><path d="M1.3,-3.0 L3.5,-0.9" stroke="#7a7a7a" stroke-width="1" fill="none"/></g><g transform="translate(201,589.2)"><ellipse cx="0" cy="0" rx="6.3" ry="5.5" fill="#fff" stroke="#7a7a7a" stroke-width="1"/><path d="M-0.3,5.2 L0.6,7.6 L2.4,4.8" fill="#fff" stroke="#7a7a7a" stroke-width="1" stroke-linejoin="miter"/><path d="M1.3,-3.0 L3.5,-0.9" stroke="#7a7a7a" stroke-width="1" fill="none"/></g><g transform="translate(591,589.2)"><ellipse cx="0" cy="0" rx="6.3" ry="5.5" fill="#fff" stroke="#7a7a7a" stroke-width="1"/><path d="M-0.3,5.2 L0.6,7.6 L2.4,4.8" fill="#fff" stroke="#7a7a7a" stroke-width="1" stroke-linejoin="miter"/><path d="M1.3,-3.0 L3.5,-0.9" stroke="#7a7a7a" stroke-width="1" fill="none"/></g><g transform="translate(660,589.2)"><ellipse cx="0" cy="0" rx="6.3" ry="5.5" fill="#fff" stroke="#7a7a7a" stroke-width="1"/><path d="M-0.3,5.2 L0.6,7.6 L2.4,4.8" fill="#fff" stroke="#7a7a7a" stroke-width="1" stroke-linejoin="miter"/><path d="M1.3,-3.0 L3.5,-0.9" stroke="#7a7a7a" stroke-width="1" fill="none"/></g><g transform="translate(853,589.2)"><ellipse cx="0" cy="0" rx="6.3" ry="5.5" fill="#fff" stroke="#7a7a7a" stroke-width="1"/><path d="M-0.3,5.2 L0.6,7.6 L2.4,4.8" fill="#fff" stroke="#7a7a7a" stroke-width="1" stroke-linejoin="miter"/><path d="M1.3,-3.0 L3.5,-0.9" stroke="#7a7a7a" stroke-width="1" fill="none"/></g><g transform="translate(868,589.2)"><ellipse cx="0" cy="0" rx="6.3" ry="5.5" fill="#fff" stroke="#7a7a7a" stroke-width="1"/><path d="M-0.3,5.2 L0.6,7.6 L2.4,4.8" fill="#fff" stroke="#7a7a7a" stroke-width="1" stroke-linejoin="miter"/><path d="M1.3,-3.0 L3.5,-0.9" stroke="#7a7a7a" stroke-width="1" fill="none"/></g><g transform="translate(883,589.2)"><ellipse cx="0" cy="0" rx="6.3" ry="5.5" fill="#fff" stroke="#7a7a7a" stroke-width="1"/><path d="M-0.3,5.2 L0.6,7.6 L2.4,4.8" fill="#fff" stroke="#7a7a7a" stroke-width="1" stroke-linejoin="miter"/><path d="M1.3,-3.0 L3.5,-0.9" stroke="#7a7a7a" stroke-width="1" fill="none"/></g>
<!-- legend -->
<rect x="37" y="631" width="12" height="12" fill="#50c3cc"/>
<text x="54.5" y="641" font-size="11" fill="#274b6d">Все игры</text>
<rect x="120" y="631" width="12" height="12" fill="#dc4124"/>
<text x="137.5" y="641" font-size="11" fill="#274b6d">Карточные</text>
<rect x="212" y="631" width="12" height="12" fill="#f6a828"/>
<text x="229.5" y="641" font-size="11" fill="#274b6d">Настольные</text>
<rect x="312" y="631" width="12" height="12" fill="#6888f4"/>
<text x="329.5" y="641" font-size="11" fill="#274b6d">Главная страница рекомендаций</text>
</svg>

<!-- table -->
<div class="b" style="left:17px;top:673px;width:1741px;height:27px;background:#efefef;border-top:1px solid #ddd;border-bottom:1px solid #ddd"></div>
<div class="b" style="left:17px;top:700px;width:1741px;height:40px;background:#f3f3f3"></div>
<div class="b" style="left:470px;top:674px;width:213px;height:25px;background:#f7f7f7"></div><div class="b" style="left:470px;top:740px;width:213px;height:160px;background:#f7f7f7"></div>
<div class="b" style="left:17px;top:699px;width:1741px;height:1px;background:#ddd"></div>
<div class="b" style="left:17px;top:779px;width:1741px;height:1px;background:#ddd"></div>
<div class="b" style="left:17px;top:819px;width:1741px;height:1px;background:#ddd"></div>
<div class="b" style="left:17px;top:859px;width:1741px;height:1px;background:#ddd"></div>
<div class="b" style="left:17px;top:899px;width:1741px;height:1px;background:#ddd"></div>
<div class="b" style="left:42px;top:674px;width:1px;height:225px;background:#ddd"></div>
<div class="b" style="left:469px;top:674px;width:1px;height:225px;background:#ddd"></div>
<div class="b" style="left:683px;top:674px;width:1px;height:225px;background:#ddd"></div>
<div class="b" style="left:1111px;top:674px;width:1px;height:225px;background:#ddd"></div>
<div class="b" style="left:1328px;top:674px;width:1px;height:225px;background:#ddd"></div>
<div class="t th" style="left:50px;top:680.00px;font-size:13px;">Категория</div>
<div class="t th" style="right:1114px;top:680.00px;font-size:13px;border-bottom:1px dotted #888;padding-bottom:1px;">Частота</div>
<div class="t th" style="left:691px;top:680.00px;font-size:13px;border-bottom:1px dotted #888;padding-bottom:1px;letter-spacing:-0.25px;">% Частота</div>
<div class="t th" style="right:469px;top:680.00px;font-size:13px;border-bottom:1px dotted #888;padding-bottom:1px;">Видимость рекомендации</div>
<div class="t th" style="left:1336px;top:680.00px;font-size:13px;border-bottom:1px dotted #888;padding-bottom:1px;">% видимости рекомендации</div>
<div class="b" style="left:454px;top:683px;width:0;height:0;border-left:4px solid transparent;border-right:4px solid transparent;border-bottom:5px solid #ccc"></div><div class="b" style="left:454px;top:689px;width:0;height:0;border-left:4px solid transparent;border-right:4px solid transparent;border-top:5px solid #ccc"></div>
<div class="b" style="left:668px;top:683px;width:0;height:0;border-left:4px solid transparent;border-right:4px solid transparent;border-bottom:5px solid #ccc"></div><div class="b" style="left:668px;top:689px;width:0;height:0;border-left:4px solid transparent;border-right:4px solid transparent;border-top:5px solid #333"></div>
<div class="b" style="left:1096px;top:683px;width:0;height:0;border-left:4px solid transparent;border-right:4px solid transparent;border-bottom:5px solid #ccc"></div><div class="b" style="left:1096px;top:689px;width:0;height:0;border-left:4px solid transparent;border-right:4px solid transparent;border-top:5px solid #ccc"></div>
<div class="b" style="left:1313px;top:683px;width:0;height:0;border-left:4px solid transparent;border-right:4px solid transparent;border-bottom:5px solid #ccc"></div><div class="b" style="left:1313px;top:689px;width:0;height:0;border-left:4px solid transparent;border-right:4px solid transparent;border-top:5px solid #ccc"></div>
<div class="b" style="left:1743px;top:683px;width:0;height:0;border-left:4px solid transparent;border-right:4px solid transparent;border-bottom:5px solid #ccc"></div><div class="b" style="left:1743px;top:689px;width:0;height:0;border-left:4px solid transparent;border-right:4px solid transparent;border-top:5px solid #ccc"></div>
<div class="b" style="left:23px;top:712px;width:12px;height:12px;border:1px solid #a9a9a9;border-radius:3px;background:linear-gradient(#f0f0f0,#dedede);box-shadow:0 1px 0 rgba(0,0,0,.05)"></div>
<div class="b" style="left:23px;top:752px;width:12px;height:12px;border:1px solid #a9a9a9;border-radius:3px;background:linear-gradient(#f0f0f0,#dedede);box-shadow:0 1px 0 rgba(0,0,0,.05)"></div><svg style="left:23px;top:751px" width="14" height="14" viewBox="0 0 14 14"><path d="M3.3,7.3 L5.6,9.7 L10.1,3.9" stroke="#3a3a3a" stroke-width="2.4" fill="none"/></svg>
<div class="b" style="left:23px;top:792px;width:12px;height:12px;border:1px solid #a9a9a9;border-radius:3px;background:linear-gradient(#f0f0f0,#dedede);box-shadow:0 1px 0 rgba(0,0,0,.05)"></div><svg style="left:23px;top:791px" width="14" height="14" viewBox="0 0 14 14"><path d="M3.3,7.3 L5.6,9.7 L10.1,3.9" stroke="#3a3a3a" stroke-width="2.4" fill="none"/></svg>
<div class="b" style="left:23px;top:832px;width:12px;height:12px;border:1px solid #a9a9a9;border-radius:3px;background:linear-gradient(#f0f0f0,#dedede);box-shadow:0 1px 0 rgba(0,0,0,.05)"></div><svg style="left:23px;top:831px" width="14" height="14" viewBox="0 0 14 14"><path d="M3.3,7.3 L5.6,9.7 L10.1,3.9" stroke="#3a3a3a" stroke-width="2.4" fill="none"/></svg>
<div class="b" style="left:23px;top:872px;width:12px;height:12px;border:1px solid #a9a9a9;border-radius:3px;background:linear-gradient(#f0f0f0,#dedede);box-shadow:0 1px 0 rgba(0,0,0,.05)"></div><svg style="left:23px;top:871px" width="14" height="14" viewBox="0 0 14 14"><path d="M3.3,7.3 L5.6,9.7 L10.1,3.9" stroke="#3a3a3a" stroke-width="2.4" fill="none"/></svg>
<div class="t" style="left:49.5px;top:712.00px;font-size:13px;color:#222;-webkit-text-stroke:0.45px #222;">Всего</div>
<div class="t" style="right:1102px;top:712.0px;font-size:13px;font-weight:bold;color:#333;letter-spacing:0.45px;">1,758</div>
<div class="t" style="right:457px;top:712.0px;font-size:13px;font-weight:bold;color:#333;letter-spacing:0.45px;">36</div>
<div class="t" style="left:49.5px;top:752.00px;font-size:13px;color:#444;">Настольные</div>
<div class="t" style="right:1102px;top:752.00px;font-size:13px;color:#555;letter-spacing:0.3px;">816</div>
<div class="t" style="left:691px;top:752.00px;font-size:13px;color:#555;">46<span style="font-size:9px;color:#777;margin-left:1.5px">%</span></div>
<div class="b" style="left:728px;top:753px;width:377px;height:10px;background:#eff0f2"></div><div class="b" style="left:728px;top:753px;width:175.0px;height:10px;background:#7db0dc"></div>
<div class="t" style="right:457px;top:752.00px;font-size:13px;color:#555;">19</div>
<div class="t" style="left:1335px;top:752.00px;font-size:13px;color:#555;">52<span style="font-size:9px;color:#777;margin-left:1.5px">%</span></div>
<div class="b" style="left:1373px;top:753px;width:379px;height:10px;background:#eff0f2"></div><div class="b" style="left:1373px;top:753px;width:199.0px;height:10px;background:#7db0dc"></div>
<div class="t" style="left:49.5px;top:792.00px;font-size:13px;color:#444;">Карточные</div>
<div class="t" style="right:1102px;top:792.00px;font-size:13px;color:#555;letter-spacing:0.3px;">617</div>
<div class="t" style="left:691px;top:792.00px;font-size:13px;color:#555;">35<span style="font-size:9px;color:#777;margin-left:1.5px">%</span></div>
<div class="b" style="left:728px;top:793px;width:377px;height:10px;background:#eff0f2"></div><div class="b" style="left:728px;top:793px;width:132.3px;height:10px;background:#7db0dc"></div>
<div class="t" style="right:457px;top:792.00px;font-size:13px;color:#555;">17</div>
<div class="t" style="left:1335px;top:792.00px;font-size:13px;color:#555;">47<span style="font-size:9px;color:#777;margin-left:1.5px">%</span></div>
<div class="b" style="left:1373px;top:793px;width:379px;height:10px;background:#eff0f2"></div><div class="b" style="left:1373px;top:793px;width:178.0px;height:10px;background:#7db0dc"></div>
<div class="t" style="left:49.5px;top:832.00px;font-size:13px;color:#444;">Главная страница рекомендаций</div>
<div class="t" style="right:1102px;top:832.00px;font-size:13px;color:#555;letter-spacing:0.3px;">168</div>
<div class="t" style="left:691px;top:834.03px;font-size:10px;color:#555;">9.6<span style="font-size:9px;color:#777;margin-left:1.5px">%</span></div>
<div class="b" style="left:728px;top:833px;width:377px;height:10px;background:#eff0f2"></div><div class="b" style="left:728px;top:833px;width:36.0px;height:10px;background:#7db0dc"></div>
<div class="t" style="right:457px;top:832.00px;font-size:13px;color:#bbb;">0</div>
<div class="t" style="left:1335px;top:834.03px;font-size:10px;color:#bbb;">0.0<span style="font-size:9px;color:#bbb;margin-left:1.5px">%</span></div>
<div class="b" style="left:1373px;top:833px;width:379px;height:10px;background:#eff0f2"></div><div class="b" style="left:1373px;top:833px;width:1.0px;height:10px;background:#7db0dc"></div>
<div class="t" style="left:49.5px;top:872.00px;font-size:13px;color:#444;">Все игры</div>
<div class="t" style="right:1102px;top:872.00px;font-size:13px;color:#555;letter-spacing:0.3px;">157</div>
<div class="t" style="left:691px;top:874.03px;font-size:10px;color:#555;">8.9<span style="font-size:9px;color:#777;margin-left:1.5px">%</span></div>
<div class="b" style="left:728px;top:873px;width:377px;height:10px;background:#eff0f2"></div><div class="b" style="left:728px;top:873px;width:33.7px;height:10px;background:#7db0dc"></div>
<div class="t" style="right:457px;top:872.00px;font-size:13px;color:#bbb;">0</div>
<div class="t" style="left:1335px;top:874.03px;font-size:10px;color:#bbb;">0.0<span style="font-size:9px;color:#bbb;margin-left:1.5px">%</span></div>
<div class="b" style="left:1373px;top:873px;width:379px;height:10px;background:#eff0f2"></div><div class="b" style="left:1373px;top:873px;width:1.0px;height:10px;background:#7db0dc"></div>

</body>
</html>
